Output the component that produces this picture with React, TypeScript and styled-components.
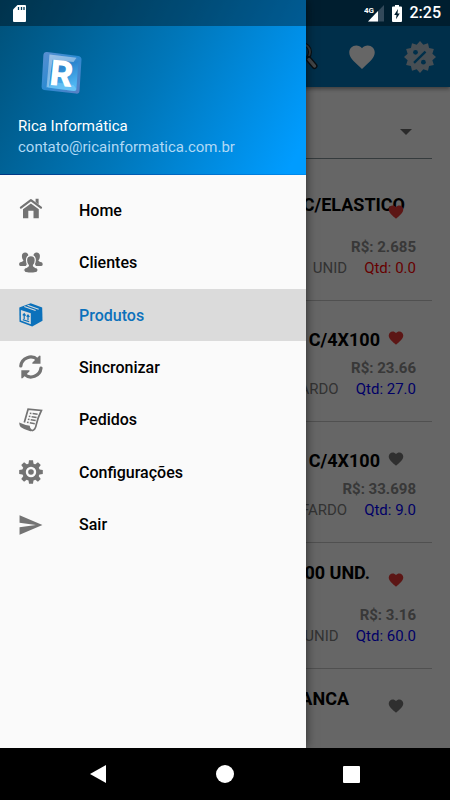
import React from "react";
import styled, { createGlobalStyle } from "styled-components";

const GlobalStyle = createGlobalStyle`
  *, *::before, *::after { box-sizing: border-box; }
  body {
    margin: 0;
    font-family: Roboto, "Liberation Sans", sans-serif;
    background: #000;
  }
  button { border: 0; padding: 0; background: none; font: inherit; cursor: pointer; }
  svg { display: block; flex: none; }
`;

const Device = styled.div`
  display: flex;
  flex-direction: column;
  height: 100vh;
  overflow: hidden;
`;

const AppArea = styled.div`
  position: relative;
  flex: 1;
  min-height: 0;
  overflow: hidden;
  background: #fff;
`;

const StatusBar = styled.header`
  position: absolute;
  inset: 0 0 auto 0;
  z-index: 3;
  display: flex;
  align-items: center;
  height: 26px;
  padding: 0 9px 0 13px;
  color: #fff;
  background: rgba(0, 0, 0, 0.36);
`;

const StatusGroup = styled.div`
  display: flex;
  align-items: center;
  gap: 8px;
  margin-left: auto;
`;

const Clock = styled.time`
  font-size: 16px;
  font-weight: 500;
  line-height: 26px;
`;

const Toolbar = styled.div`
  display: flex;
  align-items: center;
  justify-content: flex-end;
  gap: 28px;
  height: 87px;
  padding: 26px 14px 0 0;
  background: #0076ba;
  box-shadow: 0 2px 4px rgba(0, 0, 0, 0.4);
`;

const Content = styled.main`
  padding: 0 18px;
`;

const FilterField = styled.div`
  position: relative;
  height: 72px;
  padding-top: 16px;
  border-bottom: 1px solid #86949a;
`;

const FilterSelect = styled.select`
  width: 100%;
  height: 54px;
  border: 0;
  background: transparent;
  appearance: none;
  font: inherit;
`;

const FilterArrow = styled.svg`
  position: absolute;
  right: 20px;
  top: 42px;
  pointer-events: none;
`;

const ProductList = styled.ul`
  margin: 0;
  padding: 16px 0 0;
  list-style: none;
`;

const ProductRow = styled.li`
  position: relative;
  padding: 19px 0 21px;
  border-bottom: 1px solid #c8c8c8;
`;

const ProductTitle = styled.h2<{ $tall: boolean; $end: number }>`
  display: flex;
  align-items: ${(p) => (p.$tall ? "flex-start" : "center")};
  justify-content: flex-end;
  min-height: ${(p) => (p.$tall ? 43 : 38)}px;
  margin: 0;
  padding-right: ${(p) => p.$end}px;
  font-size: 18px;
  font-weight: 700;
  line-height: 21px;
  white-space: nowrap;
  color: #000;
`;

const FavoriteButton = styled.button<{ $on: boolean }>`
  position: absolute;
  top: 29px;
  right: 28px;
  color: ${(p) => (p.$on ? "#e53935" : "#757575")};
`;

const Price = styled.p`
  margin: 0;
  padding-right: 16px;
  text-align: right;
  font-size: 15px;
  font-weight: 700;
  line-height: 21px;
  color: #8c8c8c;
`;

const StockLine = styled.p`
  display: flex;
  justify-content: flex-end;
  gap: 17px;
  margin: 0;
  padding-right: 16px;
  font-size: 15px;
  line-height: 21px;
  color: #808080;
`;

const Quantity = styled.span<{ $empty: boolean }>`
  color: ${(p) => (p.$empty ? "#ff0000" : "#0000ff")};
`;

const Scrim = styled.div`
  position: absolute;
  inset: 0;
  z-index: 1;
  background: rgba(0, 0, 0, 0.6);
`;

const Drawer = styled.aside`
  position: absolute;
  inset: 0 auto 0 0;
  z-index: 2;
  width: 68%;
  max-width: 320px;
  background: #fafafa;
  box-shadow: 0 0 10px rgba(0, 0, 0, 0.6);
`;

const DrawerHeader = styled.div`
  display: flex;
  flex-direction: column;
  height: 175px;
  padding: 50px 18px 0;
  background:
    linear-gradient(90deg, #003580, #008cf0) bottom / 100% 1px no-repeat,
    linear-gradient(118deg, #005078 0%, #0077ba 50%, #009cff 95%);
`;

const AccountName = styled.strong`
  margin-top: 20px;
  font-size: 15px;
  font-weight: 400;
  line-height: 21px;
  color: #fff;
`;

const AccountMail = styled.span`
  font-size: 15px;
  line-height: 21px;
  color: #b0d9f5;
`;

const Menu = styled.nav`
  display: grid;
  grid-auto-rows: 1fr;
  height: 367px;
  margin-top: 9px;
`;

const MenuItem = styled.a<{ $active?: boolean }>`
  display: flex;
  align-items: center;
  gap: 36px;
  padding: 0 19px;
  font-size: 16px;
  font-weight: 500;
  text-decoration: none;
  color: ${(p) => (p.$active ? "#0b71bb" : "#000")};
  background: ${(p) => (p.$active ? "#dbdbdb" : "transparent")};

  svg { color: ${(p) => (p.$active ? "#0b71bb" : "#737373")}; }
`;

const NavBar = styled.footer`
  display: flex;
  height: 52px;
  padding: 0 35px;
  background: #000;
`;

const NavButton = styled.button`
  display: flex;
  flex: 1;
  align-items: center;
  justify-content: center;
  color: #fff;
`;

const LogoBox = styled.div`
  padding-left: 23px;
`;

const HEART =
  "M12 21.35l-1.45-1.32C5.4 15.36 2 12.28 2 8.5 2 5.42 4.42 3 7.5 3c1.74 0 3.41.81 4.5 2.09C13.09 3.81 14.76 3 16.5 3 19.58 3 22 5.42 22 8.5c0 3.78-3.4 6.86-8.55 11.54L12 21.35z";

const HeartIcon = ({ size }: { size: number }) => (
  <svg width={size} height={size} viewBox="1 1 22 22" fill="currentColor" aria-hidden="true">
    <path d={HEART} />
  </svg>
);

const ToolbarHeart = () => (
  <svg width="28" height="28" viewBox="1 1 22 22" fill="#fff" aria-hidden="true">
    <path d={HEART} />
  </svg>
);

const SearchIcon = () => (
  <svg width="26" height="32" viewBox="0 0 26 32" aria-hidden="true">
    <circle cx="8" cy="11" r="8" fill="none" stroke="#16242e" strokeWidth="4" />
    <circle cx="8" cy="11" r="8" fill="none" stroke="#8d979d" strokeWidth="1.8" />
    <path d="M14.500 18l6 7" stroke="#16242e" strokeWidth="6" strokeLinecap="round" />
    <path d="M15 18.500l5.500 6.500" stroke="#a8b0b5" strokeWidth="3.400" strokeLinecap="round" />
  </svg>
);

const badgePoints = Array.from({ length: 24 }, (_, i) => {
  const radius = i % 2 === 0 ? 16 : 12.8;
  const angle = (i * Math.PI) / 12;
  return `${16 + radius * Math.sin(angle)},${16 - radius * Math.cos(angle)}`;
}).join(" ");

const DiscountIcon = () => (
  <svg width="32" height="32" viewBox="0 0 32 32" aria-hidden="true">
    <polygon points={badgePoints} fill="#b4c6d2" />
    <g fill="#0076ba">
      <circle cx="11.500" cy="11.300" r="2.400" />
      <circle cx="19.400" cy="21.200" r="2.400" />
    </g>
    <path d="M10 21.800L21.500 10.600" stroke="#0076ba" strokeWidth="2.400" />
  </svg>
);

const SdCardIcon = () => (
  <svg width="13" height="17" viewBox="0 0 13 17" aria-hidden="true">
    <path d="M4.500 0H12a1 1 0 0 1 1 1v15a1 1 0 0 1-1 1H1a1 1 0 0 1-1-1V4.500z" fill="#fff" />
    <path d="M5.500 2v3M8.500 2v3M11 2v3" stroke="#003c5a" strokeWidth="1.300" />
  </svg>
);

const SignalIcon = () => (
  <svg width="20" height="17" viewBox="0 0 20 17" aria-hidden="true">
    <path d="M20 0v16.500H4z" fill="#33495a" />
    <path d="M14 6v10.500H4z" fill="#fff" />
    <text x="0" y="7.500" fontSize="8" fontWeight="700" fill="#fff">4G</text>
  </svg>
);

const BatteryIcon = () => (
  <svg width="10" height="17" viewBox="0 0 10 17" aria-hidden="true">
    <path d="M3 0h4v1.600h2a1 1 0 0 1 1 1V16a1 1 0 0 1-1 1H1a1 1 0 0 1-1-1V2.600a1 1 0 0 1 1-1h2z" fill="#fff" />
    <path d="M6 4L2.200 10h2.300l-.5 4.200L7.800 8.400H5.500z" fill="#001c2d" />
  </svg>
);

const LogoIcon = () => (
  <svg width="42" height="46" viewBox="0 0 42 46" role="img" aria-label="Rica">
    <defs>
      <linearGradient id="logoFace" x1="0" y1="0" x2="0.300" y2="1">
        <stop offset="0" stopColor="#6d9fd8" />
        <stop offset="0.450" stopColor="#2c86cf" />
        <stop offset="1" stopColor="#4fb6f2" />
      </linearGradient>
      <linearGradient id="logoSide" x1="0" y1="0" x2="1" y2="1">
        <stop offset="0" stopColor="#5b8fd0" />
        <stop offset="0.500" stopColor="#2a8ad2" />
        <stop offset="1" stopColor="#5f80c4" />
      </linearGradient>
    </defs>
    <path d="M6 2l31.500 4q3 .5 3 3.500L38.500 41q-.3 3-3.500 2.600L3 40Q.5 39.500.6 37L2.400 5Q2.800 1.700 6 2z" fill="url(#logoSide)" />
    <path d="M8.500 4.500l27 3.200q2 .4 1.900 2.400L35.400 39q-.2 2.300-2.400 2L6.500 37.600z" fill="url(#logoFace)" />
    <path d="M8.500 4.500l27 3.200-3 4.300-21-2.200-3.600 27-2.400.6z" fill="#c3dcf2" opacity="0.550" />
    <path d="M6.500 37.600l6-5.600 20 3 3 4q-.6 2-2.500 2z" fill="#7fd0fa" opacity="0.500" />
    <text x="9" y="36" fontFamily="Inter, sans-serif" fontSize="35" fontWeight="800" fill="#fff" transform="rotate(6 20 24)">R</text>
  </svg>
);

const HomeIcon = () => (
  <svg width="24" height="24" viewBox="0 0 24 24" fill="currentColor" aria-hidden="true">
    <path d="M16.600 .8h3v5.800l-3-2.600z" />
    <path d="M1.900 9.700L11.900 2.200 22 9.700" fill="none" stroke="currentColor" strokeWidth="2.200" strokeLinecap="round" strokeLinejoin="round" />
    <path d="M4 11.300l7.900-5.900 7.900 5.900v9H14.500v-7.600H9.300v7.600H4z" />
  </svg>
);

const ClientsIcon = () => (
  <svg width="24" height="24" viewBox="0 0 24 24" fill="currentColor" aria-hidden="true">
    <path d="M6.200 1.500c2 0 3.200 1.400 3.200 3.500 0 1.500-.6 3-1.300 3.700-.5 3.400.2 5-1.400 6.300H1.500C-.3 15-.3 12 1.300 11.300c1.500-.7 3.100-.9 3.100-2.100C3.400 8.300 2.900 6.700 2.900 5c0-2.100 1.300-3.500 3.300-3.500z" />
    <path d="M17.600 1.500c-2 0-3.200 1.400-3.200 3.500 0 1.500.6 3 1.300 3.700.5 3.400-.2 5 1.400 6.300h5.200c1.800 0 1.800-3 .2-3.700-1.500-.7-3.100-.9-3.100-2.100 1-.9 1.500-2.500 1.500-4.200 0-2.100-1.300-3.500-3.300-3.500z" />
    <path
      d="M11.900 4.600c2.800 0 4.400 1.900 4.400 4.600 0 2.200-.8 4-1.900 5.100-.1 1.600 1.200 1.700 3 2.400 2.200.8 2 3.400.7 4.400-1.500 1.300-10.900 1.300-12.400 0-1.300-1-1.500-3.600.7-4.400 1.800-.7 3.100-.8 3-2.400-1.100-1.100-1.900-2.900-1.900-5.100 0-2.700 1.600-4.600 4.400-4.600z"
      stroke="#fafafa"
      strokeWidth="1.200"
    />
  </svg>
);

const BoxIcon = () => (
  <svg width="24" height="24" viewBox="0 0 24 24" aria-hidden="true">
    <path d="M11.700.2l11.500 4.300.3 13.300-10.300 5.800L.5 18.800.3 4.600z" fill="currentColor" />
    <path d="M1.900 7l9.900 3.300v11L1.900 17.600z" fill="#dbdbdb" />
    <path d="M5.300 3.400l11.300 4.100M8.500 2.200l11.200 4" stroke="#dbdbdb" strokeWidth="1.100" />
    <path d="M5.200 16V11M3.800 12.400l1.400-1.700 1.400 1.900M9 17.200v-5M7.600 13.600L9 12l1.400 2M3.800 16.600l6.400 2.200" fill="none" stroke="currentColor" strokeWidth="1.200" />
  </svg>
);

const SyncIcon = () => (
  <svg width="24" height="24" viewBox="0 0 24 24" aria-hidden="true">
    <g fill="none" stroke="currentColor" strokeWidth="3.200">
      <path d="M1.800 11A10 10 0 0 1 18.600 4.800" strokeLinecap="round" />
      <path d="M22 13A10 10 0 0 1 5.200 19.200" strokeLinecap="round" />
    </g>
    <path d="M21.500.9v7.800H13.700q-1-.3-.2-1.200L20 .9q1-.7 1.500 0z" fill="currentColor" />
    <path d="M2.300 23.100v-7.800h7.800q1 .3.200 1.200L3.800 23.100q-1 .7-1.500 0z" fill="currentColor" />
  </svg>
);

const OrdersIcon = () => (
  <svg width="24" height="24" viewBox="0 0 24 24" fill="none" stroke="currentColor" aria-hidden="true">
    <path d="M5.300 14.600L9.100 1.200l13.300 1.300q-3.600 7-5.200 14.300-.8 5-4.300 6" strokeWidth="1.700" />
    <path d="M.2 14.500q6 2.700 10.600 3.300 0 3.200 3.600 4.500-1.600 1.500-3.800.8Q5 21.500 1.600 19 .2 17.500.2 14.500z" fill="currentColor" stroke="none" />
    <g strokeWidth="1.500">
      <path d="M10.800 5.200l1.600.2M9.800 8.200l1.600.3M8.900 11.200l1.600.4M8 14.200l1.600.4" />
      <path d="M13.600 5.600l5 .6M12.600 8.700l5 .7M11.700 11.800l5 .8M10.800 14.800l5 .9" />
    </g>
  </svg>
);

const GearIcon = () => (
  <svg width="24" height="24" viewBox="0 0 24 24" fill="currentColor" aria-hidden="true">
    {[0, 45, 90, 135].map((angle) => (
      <path key={angle} d="M10 .2h4l.7 4.800h-5.400zM10 23.800h4l.7-4.800h-5.400z" transform={`rotate(${angle} 12 12)`} />
    ))}
    <circle cx="12" cy="12" r="7" fill="none" stroke="currentColor" strokeWidth="3.600" />
    <circle cx="12" cy="12" r="2.800" />
  </svg>
);

const SendIcon = () => (
  <svg width="24" height="24" viewBox="1.500 1 22 22" fill="currentColor" aria-hidden="true">
    <path d="M2.010 21L23 12 2.010 3 2 10l15 2-15 2z" />
  </svg>
);

const menu = [
  { label: "Home", Icon: HomeIcon },
  { label: "Clientes", Icon: ClientsIcon },
  { label: "Produtos", Icon: BoxIcon, active: true },
  { label: "Sincronizar", Icon: SyncIcon },
  { label: "Pedidos", Icon: OrdersIcon },
  { label: "Configurações", Icon: GearIcon },
  { label: "Sair", Icon: SendIcon },
];

type Product = {
  title: string;
  end: number;
  tall: boolean;
  favorite: boolean;
  price: string;
  unit: string;
  quantity: string;
};

const products: Product[] = [
  { title: "C/ELASTICO", end: 27, tall: true, favorite: true, price: "2.685", unit: "UNID", quantity: "0.0" },
  { title: "C/4X100", end: 52, tall: false, favorite: true, price: "23.66", unit: "FARDO", quantity: "27.0" },
  { title: "C/4X100", end: 52, tall: false, favorite: false, price: "33.698", unit: "FARDO", quantity: "9.0" },
  { title: "100 UND.", end: 62, tall: true, favorite: true, price: "3.16", unit: "UNID", quantity: "60.0" },
];

export default function App() {
  return (
    <>
      <GlobalStyle />
      <Device>
        <AppArea>
          <StatusBar>
            <SdCardIcon />
            <StatusGroup>
              <SignalIcon />
              <BatteryIcon />
              <Clock>2:25</Clock>
            </StatusGroup>
          </StatusBar>

          <Toolbar>
            <button type="button" aria-label="Pesquisar"><SearchIcon /></button>
            <button type="button" aria-label="Favoritos"><ToolbarHeart /></button>
            <button type="button" aria-label="Descontos"><DiscountIcon /></button>
          </Toolbar>

          <Content>
            <FilterField>
              <FilterSelect aria-label="Filtro" />
              <FilterArrow width="12" height="6" viewBox="0 0 12 6" aria-hidden="true">
                <path d="M0 0h12L6 6z" fill="#6a6a6a" />
              </FilterArrow>
            </FilterField>
            <ProductList>
              {products.map((p, i) => (
                <ProductRow key={i}>
                  <ProductTitle $tall={p.tall} $end={p.end}>{p.title}</ProductTitle>
                  <FavoriteButton type="button" aria-label="Favorito" $on={p.favorite}>
                    <HeartIcon size={16} />
                  </FavoriteButton>
                  <Price>R$: {p.price}</Price>
                  <StockLine>
                    <span>{p.unit}</span>
                    <Quantity $empty={p.quantity === "0.0"}>Qtd: {p.quantity}</Quantity>
                  </StockLine>
                </ProductRow>
              ))}
              <ProductRow>
                <ProductTitle $tall $end={83}>BRANCA</ProductTitle>
                <FavoriteButton type="button" aria-label="Favorito" $on={false}>
                  <HeartIcon size={16} />
                </FavoriteButton>
              </ProductRow>
            </ProductList>
          </Content>

          <Scrim />

          <Drawer>
            <DrawerHeader>
              <LogoBox><LogoIcon /></LogoBox>
              <AccountName>Rica Informática</AccountName>
              <AccountMail>contato@ricainformatica.com.br</AccountMail>
            </DrawerHeader>
            <Menu>
              {menu.map(({ label, Icon, active }) => (
                <MenuItem key={label} href="#" $active={active} aria-current={active ? "page" : undefined}>
                  <Icon />
                  {label}
                </MenuItem>
              ))}
            </Menu>
          </Drawer>
        </AppArea>

        <NavBar>
          <NavButton type="button" aria-label="Voltar">
            <svg width="16" height="18" viewBox="0 0 16 18"><path d="M16 0v18L0 9z" fill="currentColor" /></svg>
          </NavButton>
          <NavButton type="button" aria-label="Início">
            <svg width="18" height="18" viewBox="0 0 18 18"><circle cx="9" cy="9" r="9" fill="currentColor" /></svg>
          </NavButton>
          <NavButton type="button" aria-label="Recentes">
            <svg width="17" height="17" viewBox="0 0 17 17"><rect width="17" height="17" rx="1" fill="currentColor" /></svg>
          </NavButton>
        </NavBar>
      </Device>
    </>
  );
}
